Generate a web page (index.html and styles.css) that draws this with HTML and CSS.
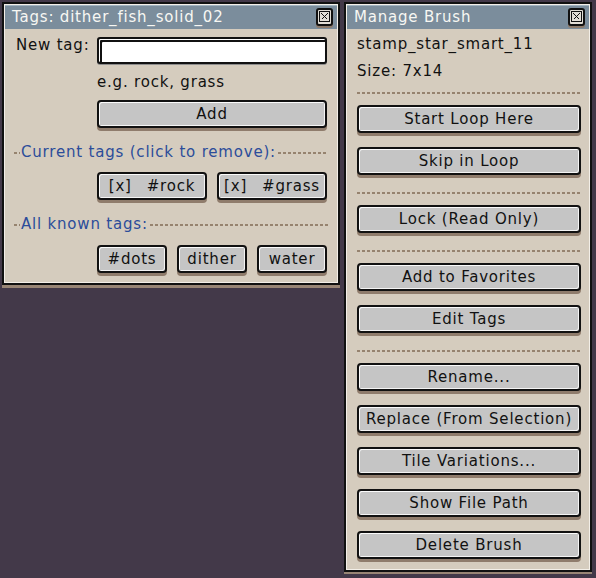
FILE: index.html
```html
<!DOCTYPE html>
<html>
<head>
<meta charset="utf-8">
<link rel="stylesheet" href="styles.css">
</head>
<body>
<div class="desk">
  <section class="win win-tags">
    <header class="titlebar">
      <span class="title">Tags: dither_fish_solid_02</span>
      <span class="close"><svg viewBox="0 0 11 11" width="11" height="11"><rect x=".5" y=".5" width="10" height="10" fill="none" stroke="#111"/><path d="M2.5 2.5L8.5 8.5M8.5 2.5L2.5 8.5" stroke="#111" stroke-width="1.4"/></svg></span>
    </header>
    <div class="content tags-grid">
      <label class="field-label">New tag:</label>
      <div class="input"></div>
      <div class="hint col2">e.g. rock, grass</div>
      <div class="btn col2 add">Add</div>
      <div class="section-head"><span>Current tags (click to remove):</span></div>
      <div class="tag-row col2 first-row">
        <div class="btn tag"><span>[x]</span><span>#rock</span></div>
        <div class="btn tag"><span>[x]</span><span>#grass</span></div>
      </div>
      <div class="section-head"><span>All known tags:</span></div>
      <div class="tag-row col2 second-row">
        <div class="btn tag">#dots</div>
        <div class="btn tag">dither</div>
        <div class="btn tag">water</div>
      </div>
    </div>
  </section>

  <section class="win win-brush">
    <header class="titlebar">
      <span class="title">Manage Brush</span>
      <span class="close"><svg viewBox="0 0 11 11" width="11" height="11"><rect x=".5" y=".5" width="10" height="10" fill="none" stroke="#111"/><path d="M2.5 2.5L8.5 8.5M8.5 2.5L2.5 8.5" stroke="#111" stroke-width="1.4"/></svg></span>
    </header>
    <div class="content brush">
      <div class="info">stamp_star_smart_11</div>
      <div class="info second">Size: 7x14</div>
      <div class="sep top-sep"></div>
      <div class="btn">Start Loop Here</div>
      <div class="btn">Skip in Loop</div>
      <div class="sep"></div>
      <div class="btn">Lock (Read Only)</div>
      <div class="sep"></div>
      <div class="btn">Add to Favorites</div>
      <div class="btn">Edit Tags</div>
      <div class="sep"></div>
      <div class="btn">Rename...</div>
      <div class="btn">Replace (From Selection)</div>
      <div class="btn">Tile Variations...</div>
      <div class="btn">Show File Path</div>
      <div class="btn">Delete Brush</div>
    </div>
  </section>
</div>
</body>
</html>
```

FILE: styles.css
```css
html, body {
  margin: 0;
  background: #433949;
}
body {
  font-family: "DejaVu Sans", "Noto Sans", sans-serif;
  font-size: 15px;
  letter-spacing: 0.8px;
  color: #111;
}
.desk {
  display: flex;
  align-items: flex-start;
  gap: 4px;
  padding: 2px;
}
.win {
  box-sizing: border-box;
  border: 2px solid #111;
  padding: 1px;
  background: #f3efe8;
  box-shadow: 0 3px 0 #988575;
  display: flex;
  flex-direction: column;
}
.win-tags { width: 338px; }
.win-brush { width: 248px; }

.titlebar {
  height: 24px;
  background: #7b8d9c;
  box-shadow: inset 0 1px 0 #a2b3c0;
  display: flex;
  align-items: center;
  justify-content: space-between;
  padding: 0 4px 0 7px;
  color: #f7f7f3;
}
.title { line-height: 16px; }
.close {
  box-sizing: border-box;
  width: 17px;
  height: 18px;
  border: 2px solid #111;
  border-radius: 3px;
  background: #e2ded6;
  box-shadow: 0 2px 0 #8c7b6c;
  display: grid;
  place-items: center;
  margin-top: -1px;
}
.close svg { display: block; shape-rendering: crispEdges; }

.content {
  background: #d5ccbe;
}

/* Tags window */
.tags-grid {
  display: grid;
  grid-template-columns: 83px 1fr;
  padding: 8px 10px 9px 9px;
}
.field-label {
  padding-left: 2px;
  line-height: 16px;
}
.input {
  box-sizing: border-box;
  height: 27px;
  background: #fff;
  border: 2px solid #111;
  border-radius: 3px;
  box-shadow: inset 1px 1px 0 #fff, inset 3px 3px 0 #111, 0 1px 0 #8d8d8d;
}
.col2 { grid-column: 2; }
.hint {
  margin-top: 10px;
  line-height: 16px;
}
.add { margin-top: 10px; }

.section-head {
  grid-column: 1 / -1;
  display: flex;
  align-items: center;
  line-height: 16px;
  color: #2c4c9a;
  margin-top: 16px;
}
.section-head::before,
.section-head::after {
  content: "";
  height: 2px;
  margin-top: 2px;
  background: repeating-linear-gradient(90deg, #96836f 0 3px, transparent 3px 5px);
}
.section-head::before {
  width: 6px;
  margin-right: 1px;
}
.section-head::after {
  flex: 1;
  margin-left: 2px;
  margin-right: -1px;
}
.tag-row {
  display: flex;
  gap: 10px;
}
.first-row { margin-top: 12px; }
.second-row { margin-top: 13px; }
.tag { flex: 1; gap: 15px; }

/* Buttons */
.btn {
  box-sizing: border-box;
  height: 28px;
  border: 2px solid #111;
  border-radius: 4px;
  background: #c5c5c5;
  box-shadow: inset 1px 1px 0 #fbfbfb, inset -1px -1px 0 #f4f4f4, 0 3px 0 #8f7c6c;
  display: flex;
  align-items: center;
  justify-content: center;
  line-height: 16px;
  white-space: nowrap;
}

/* Brush window */
.brush {
  display: flex;
  flex-direction: column;
  padding: 7px 8px 10px 10px;
}
.info { line-height: 16px; }
.info.second { margin-top: 11px; }
.sep {
  height: 2px;
  margin: 17px 0 11px;
  background: repeating-linear-gradient(90deg, #96836f 0 3px, transparent 3px 5px);
}
.sep.top-sep { margin-top: 13px; }
.brush .btn + .btn { margin-top: 14px; }
```
